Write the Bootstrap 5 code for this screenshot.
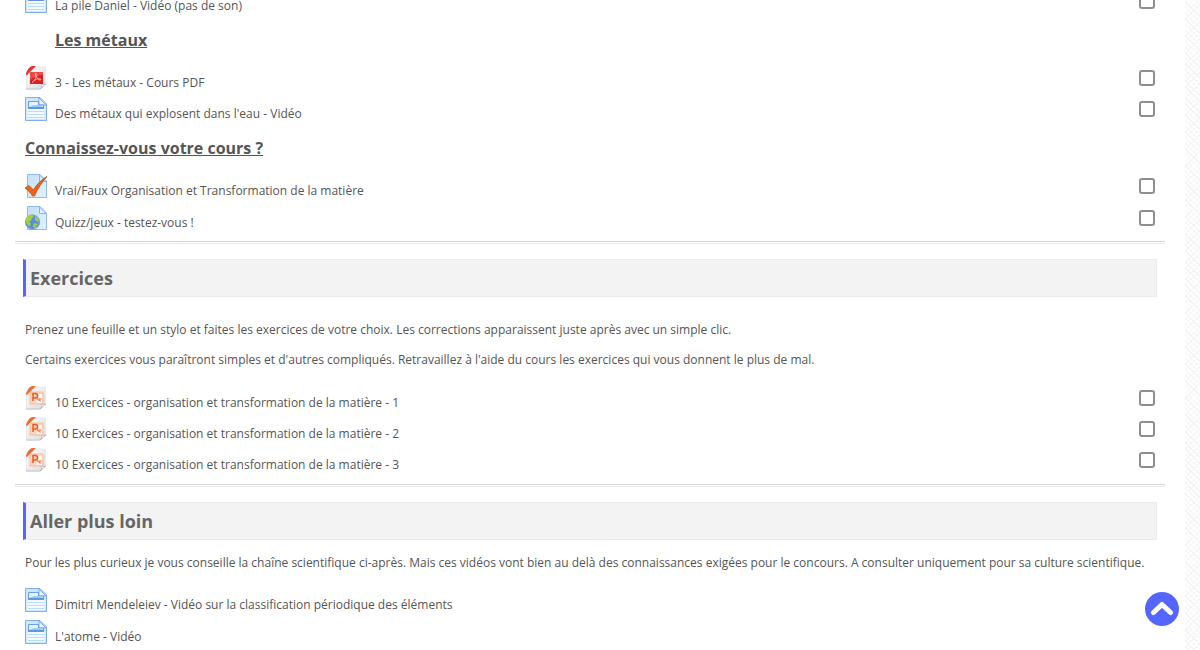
<!DOCTYPE html>
<html lang="fr">
<head>
<meta charset="utf-8">
<meta name="viewport" content="width=device-width, initial-scale=1">
<title>Organisation et transformation de la matière</title>
<link href="https://cdn.jsdelivr.net/npm/bootstrap@5.3.0/dist/css/bootstrap.min.css" rel="stylesheet">
<style>
body {
  font: 12px/20px "Open Sans", "Noto Sans", sans-serif;
  color: #555;
  background:
    repeating-linear-gradient(45deg, #f3f3f3 0 1px, transparent 1px 4px),
    repeating-linear-gradient(-45deg, #f6f6f6 0 1px, #fff 1px 4px);
}
.course { margin: -13px 15px 0 0; padding: 0 20px 0 15px; background: #fff; }
.topic { padding: 0 8px 7px; border-bottom: 1px solid #d8d8d8; box-shadow: 0 1px #fff, 0 2px #ececec; margin-bottom: 2px; }
.topic + .topic { padding-top: 15px; }
.topic-quiz { padding-bottom: 5px; }
.topic:last-of-type { border: 0; padding-bottom: 0; margin: 0; box-shadow: none; }
.topic-title {
  font-size: 18px; line-height: 36px; font-weight: 700; color: #666;
  background: #f3f3f3; border: 1px solid #ebebeb; border-left: 3px solid #5566ff;
  padding-left: 4px; margin: 0;
}
.label-title { font-size: 16px; line-height: 22px; font-weight: 700; padding: 11px 2px 13px; margin: 0; text-decoration: underline; }
.label-indent { padding-left: 32px; }
.intro { padding: 23px 2px 14px; }
.intro-short { padding: 13px 2px; }
.intro p { margin: 0 0 10px; }
.intro p:last-child, .intro-short p { margin: 0; }
.activities li { height: 31px; padding: 2px 2px 0; }
.activities.roomy li { height: 32px; }
.activities a { color: inherit; text-decoration: none; gap: 8px; }
.activities a:hover { text-decoration: underline; }
.activities a span { padding-top: 7px; }
.activities svg { width: 22px; height: 24px; flex: none; }
.activities .form-check-input {
  width: 16px; height: 16px; margin: 4px 0 0; border: 2px solid #8f8f8f; border-radius: 3px; background-color: #fff;
}
.activities .form-check-input:checked { background-color: #5566ff; border-color: #5566ff; }
.to-top { position: fixed; right: 21px; bottom: 24px; width: 34px; height: 34px; background: #5566ff; }
</style>
</head>
<body>
<svg class="position-absolute" width="0" height="0" aria-hidden="true">
  <defs>
    <linearGradient id="paper" x1="0" y1="0" x2="1" y2="1"><stop stop-color="#c5e0fa"/><stop offset="1" stop-color="#e0f2ff"/></linearGradient>
    <linearGradient id="grey" x1="0" y1="0" x2="1" y2="1"><stop stop-color="#fff"/><stop offset="1" stop-color="#d9dade"/></linearGradient>
    <symbol id="i-blank" viewBox="0 0 22 24">
      <path d="M2.500.5H15L21.500 7V23.500H2.500z" fill="url(#paper)" stroke="#8fb9f4"/>
      <path d="M14.500 1V7.500H21z" fill="#e4f3ff" stroke="#84b2f4"/>
    </symbol>
    <symbol id="i-page" viewBox="0 0 22 24">
      <path d="M.5.5H15L21.500 7V23.500H.5z" fill="#cfe7fc" stroke="#7eaef5"/>
      <path d="M2.500 10h17v12h-17z" fill="#f3fbff"/>
      <path d="M3 14.500h16M3 17.500h16M3 20.500h16" stroke="#b5dcfb"/>
      <path d="M14 1V8H21z" fill="#e9f6ff" stroke="#7eaef5"/>
      <path d="M3.500 4.500H13.500V8H18.500V11H3.500z" fill="#e2f3fc" stroke="#6c9eeb"/>
      <path d="M4 10c4-2 8-3 14 0z" fill="#9bcbe9"/><path d="M3 11h16" stroke="#4a83df" stroke-width="1.500"/>
    </symbol>
    <symbol id="i-file" viewBox="0 0 22 24">
      <path d="M1.500 7 8 1H20.500V18L15.500 23H1.500z" fill="url(#grey)" stroke="#e8e8eb"/>
      <path d="M15 23c2-1 2-3 1.500-5 1.500.8 3.500.5 4.500 0z" fill="#fff" stroke="#aaaeb5" stroke-width=".7"/>
      <path d="M1 23h14" stroke="#c3c4c8"/>
    </symbol>
    <symbol id="i-pdf" viewBox="0 0 22 24">
      <use href="#i-file"/>
      <path d="M1 9C1 5 4 1 7 0h4L2 9z" fill="#e5322c"/>
      <path d="M5 6H18V18H5z" fill="#dc1f20"/><path d="M5 6H18V9C13 9 9 11 5 14z" fill="#f04a43"/>
      <path d="M7 16.500c3-2 5-6 4-9-1-1-1 2 1 4 1 2 3 3 4 2 0-1-4-1-7 1" fill="none" stroke="#ffd0c8" stroke-width=".8"/>
    </symbol>
    <symbol id="i-ppt" viewBox="0 0 22 24">
      <use href="#i-file"/>
      <path d="M1 9C1 5 4 1 7 0h4L2 9z" fill="#ec7138"/>
      <path d="M5 6H18V18H5z" fill="#fcd6c3" stroke="#f7ba9c"/>
      <path d="M13 8h4v4h-3zM12 14h5v3h-6z" fill="#fff" opacity=".9"/>
      <path d="M8 15V7.500H10c3.500 0 3.500 4.500 0 4.500H8" fill="none" stroke="#e65b1f" stroke-width="1.500"/>
      <path d="M12 12.500l3 2.500v-3" fill="none" stroke="#ee8352" stroke-width="1.200"/>
    </symbol>
    <symbol id="i-quiz" viewBox="0 0 22 24">
      <use href="#i-blank"/>
      <path d="M0 14 4 11.500 8.500 16C12 10 16 6 22 2.500 17 8 13 14 9.500 22H7.500C6 19 3 16 0 14z" fill="#ee6516" stroke="#b94b12" stroke-width=".8"/>
    </symbol>
    <symbol id="i-web" viewBox="0 0 22 24">
      <use href="#i-blank"/>
      <circle cx="7.500" cy="16" r="7.200" fill="#5b8fdd" stroke="#7399c9" stroke-width=".7"/>
      <path d="M1 14c0-3 3-5.500 6-5.500l2 1.500-2 2-1 2.500-2 1 2 2.500-2 2.500C2 19 1 17 1 14zM10 10l3 2 1 4-3-1-1-2zM9 17l4 1-3 4-2-1z" fill="#a5cf3d"/>
    </symbol>
  </defs>
</svg>

<main class="course">
  <section class="topic topic-quiz">
    <ul class="activities list-unstyled m-0">
      <li class="d-flex justify-content-between"><a class="d-flex" href="#"><svg aria-hidden="true"><use href="#i-page"/></svg><span>La pile Daniel - Vidéo (pas de son)</span></a><input class="form-check-input" type="checkbox" aria-label="La pile Daniel - Vidéo (pas de son)"></li>
    </ul>
    <h3 class="label-title label-indent">Les métaux</h3>
    <ul class="activities list-unstyled m-0">
      <li class="d-flex justify-content-between"><a class="d-flex" href="#"><svg aria-hidden="true"><use href="#i-pdf"/></svg><span>3 - Les métaux - Cours PDF</span></a><input class="form-check-input" type="checkbox" aria-label="3 - Les métaux - Cours PDF"></li>
      <li class="d-flex justify-content-between"><a class="d-flex" href="#"><svg aria-hidden="true"><use href="#i-page"/></svg><span>Des métaux qui explosent dans l'eau - Vidéo</span></a><input class="form-check-input" type="checkbox" aria-label="Des métaux qui explosent dans l'eau - Vidéo"></li>
    </ul>
    <h3 class="label-title">Connaissez-vous votre cours ?</h3>
    <ul class="activities roomy list-unstyled m-0">
      <li class="d-flex justify-content-between"><a class="d-flex" href="#"><svg aria-hidden="true"><use href="#i-quiz"/></svg><span>Vrai/Faux Organisation et Transformation de la matière</span></a><input class="form-check-input" type="checkbox" aria-label="Vrai/Faux Organisation et Transformation de la matière"></li>
      <li class="d-flex justify-content-between"><a class="d-flex" href="#"><svg aria-hidden="true"><use href="#i-web"/></svg><span>Quizz/jeux - testez-vous !</span></a><input class="form-check-input" type="checkbox" aria-label="Quizz/jeux - testez-vous !"></li>
    </ul>
  </section>

  <section class="topic">
    <h2 class="topic-title">Exercices</h2>
    <div class="intro">
      <p>Prenez une feuille et un stylo et faites les exercices de votre choix. Les corrections apparaissent juste après avec un simple clic.</p>
      <p>Certains exercices vous paraîtront simples et d'autres compliqués. Retravaillez à l'aide du cours les exercices qui vous donnent le plus de mal.</p>
    </div>
    <ul class="activities list-unstyled m-0">
      <li class="d-flex justify-content-between"><a class="d-flex" href="#"><svg aria-hidden="true"><use href="#i-ppt"/></svg><span>10 Exercices - organisation et transformation de la matière - 1</span></a><input class="form-check-input" type="checkbox" aria-label="10 Exercices - 1"></li>
      <li class="d-flex justify-content-between"><a class="d-flex" href="#"><svg aria-hidden="true"><use href="#i-ppt"/></svg><span>10 Exercices - organisation et transformation de la matière - 2</span></a><input class="form-check-input" type="checkbox" aria-label="10 Exercices - 2"></li>
      <li class="d-flex justify-content-between"><a class="d-flex" href="#"><svg aria-hidden="true"><use href="#i-ppt"/></svg><span>10 Exercices - organisation et transformation de la matière - 3</span></a><input class="form-check-input" type="checkbox" aria-label="10 Exercices - 3"></li>
    </ul>
  </section>

  <section class="topic">
    <h2 class="topic-title">Aller plus loin</h2>
    <div class="intro-short">
      <p>Pour les plus curieux je vous conseille la chaîne scientifique ci-après. Mais ces vidéos vont bien au delà des connaissances exigées pour le concours. A consulter uniquement pour sa culture scientifique.</p>
    </div>
    <ul class="activities roomy list-unstyled m-0">
      <li class="d-flex"><a class="d-flex" href="#"><svg aria-hidden="true"><use href="#i-page"/></svg><span>Dimitri Mendeleiev - Vidéo sur la classification périodique des éléments</span></a></li>
      <li class="d-flex"><a class="d-flex" href="#"><svg aria-hidden="true"><use href="#i-page"/></svg><span>L'atome - Vidéo</span></a></li>
    </ul>
  </section>
</main>

<a class="to-top rounded-circle d-flex align-items-center justify-content-center" href="#" aria-label="Haut de page">
  <svg width="24" height="18" viewBox="0 0 24 18" aria-hidden="true"><path d="M3.500 12.500 12 4.500 20.500 12.500" fill="none" stroke="#fff" stroke-width="5" stroke-linecap="round" stroke-linejoin="round"/></svg>
</a>
<script src="https://cdn.jsdelivr.net/npm/bootstrap@5.3.0/dist/js/bootstrap.bundle.min.js"></script>
</body>
</html>
